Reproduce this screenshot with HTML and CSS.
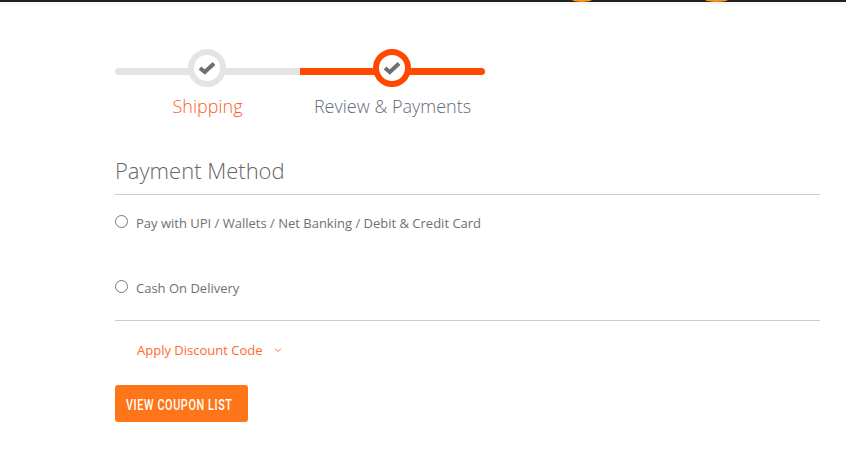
FILE: index.html
```html
<!DOCTYPE html>
<html lang="en">
<head>
    <meta charset="UTF-8">
    <meta name="viewport" content="width=device-width, initial-scale=1.0">
    <title>Checkout - Payment</title>
    <link rel="stylesheet" href="styles.css">
</head>
<body>

    <!-- Header edge, the rest is scrolled away -->
    <div class="top-bar">
        <span class="glow glow-one"></span>
        <span class="glow glow-two"></span>
    </div>

    <div class="page">
        <!-- Progress -->
        <ul class="steps">
            <li class="step step-shipping">
                <span class="step-track"></span>
                <span class="step-circle">
                    <svg class="check" viewBox="0 0 18 14"><path d="M2 7 L6.8 11 L16 2.6" fill="none" stroke="#6f6f6f" stroke-width="4"/></svg>
                </span>
                <span class="step-title">Shipping</span>
            </li>
            <li class="step step-payment">
                <span class="step-track"></span>
                <span class="step-circle">
                    <svg class="check" viewBox="0 0 18 14"><path d="M2 7 L6.8 11 L16 2.6" fill="none" stroke="#6f6f6f" stroke-width="4"/></svg>
                </span>
                <span class="step-title">Review &amp; Payments</span>
            </li>
        </ul>

        <!-- Payment options -->
        <div class="payment">
            <h2 class="payment-title">Payment Method</h2>
            <label class="method method-online">
                <input type="radio" name="method">
                <span>Pay with UPI / Wallets / Net Banking / Debit &amp; Credit Card</span>
            </label>
            <label class="method method-cod">
                <input type="radio" name="method">
                <span>Cash On Delivery</span>
            </label>
        </div>

        <div class="discount">
            <span>Apply Discount Code</span>
            <svg class="chevron" viewBox="0 0 8 6"><path d="M1 1.5 L4 4.5 L7 1.5" fill="none" stroke="#ff6a2a" stroke-width="1"/></svg>
        </div>

        <button class="coupon-btn"><span class="coupon-label">View Coupon List</span></button>
    </div>

</body>
</html>
```

FILE: styles.css
```css
/* Body Styling */
body {
    margin: 0;
    height: 472px;
    overflow: hidden;
    background-color: #fff;
    font-family: "Open Sans", Arial, sans-serif;
    color: #666;
}

/* Top bar */
.top-bar {
    position: relative;
    height: 2px;
    background-color: #222;
    box-shadow: 0 1px 5px rgba(0, 0, 0, 0.12);
    overflow: hidden;
}

.glow {
    position: absolute;
    top: -3px;
    height: 5px;
    border-radius: 50%;
    background-color: #f7931e;
}

.glow-one {
    left: 572px;
    width: 20px;
}

.glow-two {
    left: 705px;
    width: 23px;
}

.page {
    width: 705px;
    margin-left: 115px;
}

/* Progress */
.steps {
    display: flex;
    list-style: none;
    margin: 0;
    padding: 45px 0 0;
}

.step {
    position: relative;
    display: flex;
    flex-direction: column;
    align-items: center;
    width: 185px;
}

.step-track {
    position: absolute;
    top: 21px;
    left: 0;
    right: 0;
    height: 7px;
    background-color: #e4e4e4;
}

.step-shipping .step-track {
    border-radius: 4px 0 0 4px;
}

.step-payment .step-track {
    background-color: #ff4800;
    border-radius: 0 4px 4px 0;
}

.step-circle {
    position: relative;
    display: flex;
    align-items: center;
    justify-content: center;
    width: 38px;
    height: 38px;
    box-sizing: border-box;
    border: 6px solid #e4e4e4;
    border-radius: 50%;
    background-color: #fff;
    margin: 2px 0 0 -1px;
}

.step-payment .step-circle {
    border-color: #ff4800;
}

.check {
    flex-shrink: 0;
    width: 18px;
    height: 14px;
}

.step-title {
    margin-top: 6px;
    font-size: 18px;
    font-weight: 300;
    line-height: 26px;
    white-space: nowrap;
    color: #5f6b78;
}

.step-shipping .step-title {
    color: #ff5a1f;
}

/* Payment options */
.payment {
    margin-top: 31px;
    border-bottom: 1px solid #ccc;
    height: 170px;
}

.payment-title {
    margin: 0;
    height: 44px;
    font-size: 22px;
    font-weight: 300;
    line-height: 40px;
    color: #666;
    border-bottom: 1px solid #ccc;
}

.method {
    display: flex;
    align-items: flex-start;
    font-size: 13px;
    line-height: 20px;
    color: #707070;
}

.method input {
    margin: 2px 8px 0 0;
    width: 13px;
    height: 13px;
}

.method-online {
    margin-top: 18px;
}

.method-cod {
    margin-top: 45px;
}

/* Discount */
.discount {
    display: flex;
    align-items: center;
    gap: 12px;
    margin: 20px 0 0 22px;
    font-size: 13px;
    line-height: 18px;
    color: #ff6a2a;
}

.chevron {
    width: 8px;
    height: 6px;
}

.coupon-btn {
    display: block;
    margin-top: 26px;
    width: 133px;
    height: 37px;
    padding: 2px 0 0 11px;
    border: none;
    border-radius: 3px;
    background-color: #ff7519;
    color: #fff;
    font-family: Roboto, Arial, sans-serif;
    font-size: 15px;
    font-weight: 500;
    letter-spacing: 0.8px;
    text-align: left;
    text-transform: uppercase;
    white-space: nowrap;
}

/* No Oswald here, so squeeze Roboto to the same narrow look */
.coupon-label {
    display: inline-block;
    transform: scaleX(0.725);
    transform-origin: left center;
}
```
